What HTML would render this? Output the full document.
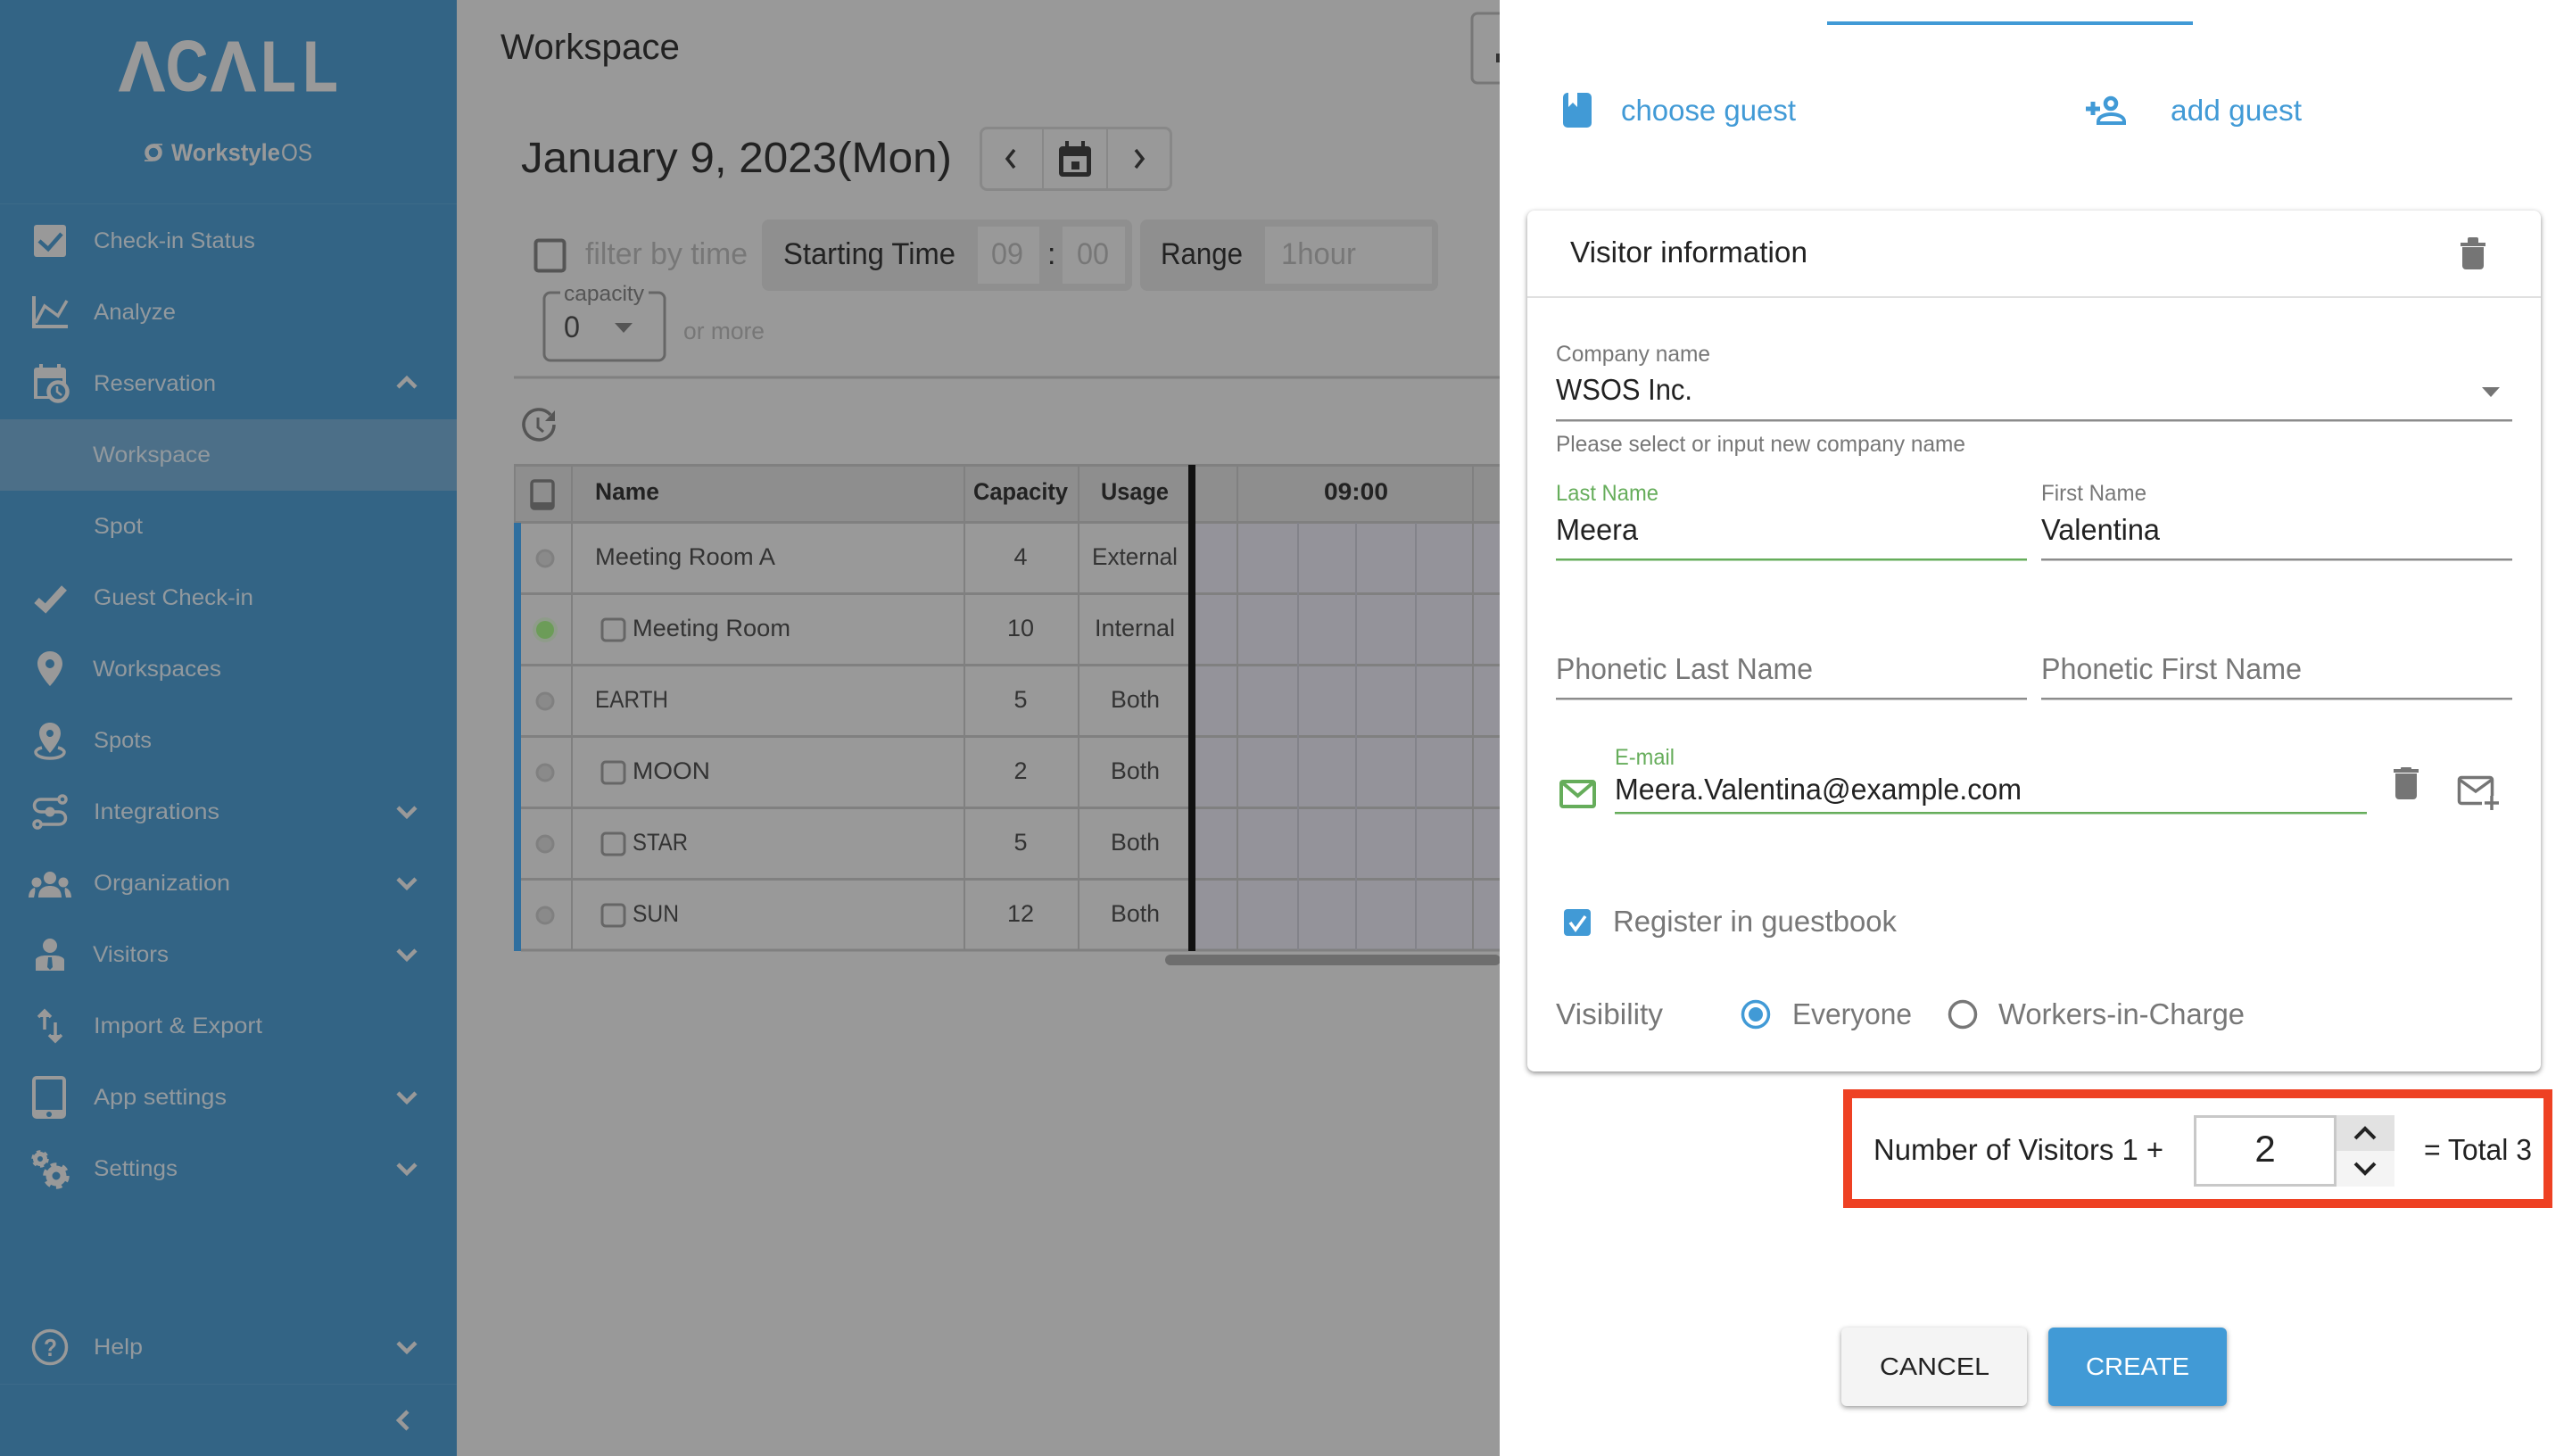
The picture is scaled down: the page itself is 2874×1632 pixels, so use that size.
<!DOCTYPE html>
<html lang="en"><head><meta charset="utf-8"><title>Workspace</title>
<style>
html,body{margin:0;padding:0;width:2874px;height:1632px;overflow:hidden;background:#999}
svg{display:block;font-family:"Liberation Sans",sans-serif}
.m{font-size:25px;fill:#92999e}
.d{fill:#222}.g{fill:#777}.b{fill:#419ad6}.gr{fill:#66ad5b}
.t27{font-size:27px}.t33{font-size:33px}.t25{font-size:25px}.t34{font-size:34px}
.ch{fill:none;stroke:#999;stroke-width:4.5}
.cell{font-size:27px;fill:#333}
</style></head><body>
<svg xmlns="http://www.w3.org/2000/svg" width="2874" height="1632" viewBox="0 0 2874 1632">
<rect width="2874" height="1632" fill="#999"/>
<!-- sidebar -->
<rect width="512" height="1632" fill="#336485"/>
<rect y="228" width="512" height="1" fill="#3c6a89"/>
<rect y="1551" width="512" height="1" fill="#3c6a89"/>
<rect y="470" width="512" height="80" fill="#4c6f88"/>
<g fill="#999" stroke="#999" stroke-width="1" font-weight="700" font-size="80">
<text x="133" y="102" textLength="52" lengthAdjust="spacingAndGlyphs">Λ</text>
<text x="186" y="101" textLength="47" lengthAdjust="spacingAndGlyphs">C</text>
<text x="236" y="102" textLength="51" lengthAdjust="spacingAndGlyphs">Λ</text>
<text x="292.500" y="102" textLength="39" lengthAdjust="spacingAndGlyphs">L</text>
<text x="339.500" y="102" textLength="39" lengthAdjust="spacingAndGlyphs">L</text>
</g>
<circle cx="172" cy="171" r="7.500" fill="none" stroke="#999" stroke-width="4.500"/>
<path d="M172 162h10M162 180h9" stroke="#999" stroke-width="1.800"/>
<text x="192" y="180" font-size="27" font-weight="700" fill="#999" textLength="122" lengthAdjust="spacingAndGlyphs">Workstyle</text>
<text x="315" y="180" font-size="27" fill="#999" textLength="35" lengthAdjust="spacingAndGlyphs">OS</text>
<g class="m">
<text x="105" y="278" textLength="181" lengthAdjust="spacingAndGlyphs">Check-in Status</text>
<text x="105" y="358" textLength="92" lengthAdjust="spacingAndGlyphs">Analyze</text>
<text x="105" y="438" textLength="137" lengthAdjust="spacingAndGlyphs">Reservation</text>
<text x="104" y="518" textLength="132" lengthAdjust="spacingAndGlyphs">Workspace</text>
<text x="105" y="598" textLength="55" lengthAdjust="spacingAndGlyphs">Spot</text>
<text x="105" y="678" textLength="179" lengthAdjust="spacingAndGlyphs">Guest Check-in</text>
<text x="104" y="758" textLength="144" lengthAdjust="spacingAndGlyphs">Workspaces</text>
<text x="105" y="838" textLength="65" lengthAdjust="spacingAndGlyphs">Spots</text>
<text x="105" y="918" textLength="141" lengthAdjust="spacingAndGlyphs">Integrations</text>
<text x="105" y="998" textLength="153" lengthAdjust="spacingAndGlyphs">Organization</text>
<text x="104" y="1078" textLength="85" lengthAdjust="spacingAndGlyphs">Visitors</text>
<text x="105" y="1158" textLength="189" lengthAdjust="spacingAndGlyphs">Import &amp; Export</text>
<text x="105" y="1238" textLength="149" lengthAdjust="spacingAndGlyphs">App settings</text>
<text x="105" y="1318" textLength="94" lengthAdjust="spacingAndGlyphs">Settings</text>
<text x="105" y="1518" textLength="55" lengthAdjust="spacingAndGlyphs">Help</text>
</g>
<path class="ch" d="M446 434l10-10 10 10"/>
<path class="ch" d="M446 905l10 10 10-10M446 985l10 10 10-10M446 1065l10 10 10-10M446 1225l10 10 10-10M446 1305l10 10 10-10M446 1505l10 10 10-10"/>
<path class="ch" d="M457 1582l-10 10 10 10"/>
<!-- sidebar icons -->
<rect x="38" y="252" width="36" height="36" rx="3" fill="#999"/>
<path d="M44 270l10 9 15-17" fill="none" stroke="#336485" stroke-width="4.500"/>
<path d="M38 332v34h38" fill="none" stroke="#999" stroke-width="4"/>
<path d="M40 362l10-19 15 11 10-17" fill="none" stroke="#999" stroke-width="3.500"/>
<path d="M38 415a3 3 0 0 1 3-3h3v-4h4v4h16v-4h4v4h3a3 3 0 0 1 3 3v32H38z" fill="#999"/>
<rect x="42" y="424" width="28" height="20" fill="#336485"/>
<circle cx="65" cy="439" r="10.500" fill="#336485" stroke="#999" stroke-width="4.500"/>
<path d="M64 433v6l5 4" fill="none" stroke="#999" stroke-width="2.500"/>
<path d="M41 673l10 9 21-23" fill="none" stroke="#999" stroke-width="8"/>
<path fill-rule="evenodd" d="M56 730c-8 0-14 6-14 14 0 10 14 25 14 25s14-15 14-25c0-8-6-14-14-14zm0 9a5 5 0 1 1 0 10 5 5 0 0 1 0-10z" fill="#999"/>
<path fill-rule="evenodd" d="M56 810c-7 0-12 5-12 12 0 9 12 22 12 22s12-13 12-22c0-7-5-12-12-12zm0 8a4 4 0 1 1 0 8 4 4 0 0 1 0-8z" fill="#999"/>
<path d="M47 838c-4 1-7 3-7 5 0 4 7 7 16 7s16-3 16-7c0-2-3-4-7-5" fill="none" stroke="#999" stroke-width="3.500"/>
<g fill="none" stroke="#999" stroke-width="3.500"><circle cx="70" cy="896" r="4"/><circle cx="42" cy="924" r="4"/><path d="M66 896H46c-10 0-10 14 0 14h20c10 0 10 14 0 14H46"/></g>
<circle cx="56" cy="910" r="5.500" fill="#999"/>
<g fill="#999"><circle cx="56" cy="984" r="7"/><circle cx="41" cy="989" r="5.500"/><circle cx="71" cy="989" r="5.500"/>
<path d="M43 1006c0-9 5-13 13-13s13 4 13 13zM32 1006c0-6 3-10 7-11 1 3 0 7-1 11zM80 1006c0-6-3-10-7-11-1 3 0 7 1 11z"/></g>
<circle cx="56" cy="1060" r="8" fill="#999"/>
<path fill-rule="evenodd" d="M40 1088v-12c0-3 6-5 11-5h10c5 0 11 2 11 5v12zM54 1073l-1 11 3 3 3-3-1-11z" fill="#999"/>
<path d="M50 1154v-18M43 1140l7-7 7 7M62 1146v18M55 1160l7 7 7-7" fill="#999" stroke="#999" stroke-width="3.500"/>
<rect x="38" y="1208" width="34" height="44" rx="3" fill="none" stroke="#999" stroke-width="4"/>
<rect x="38" y="1244" width="34" height="9" fill="#999"/><circle cx="55" cy="1249" r="3" fill="#336485"/>
<g fill="none" stroke="#999"><circle cx="45" cy="1299" r="5.500" stroke-width="5"/><circle cx="45" cy="1299" r="8" stroke-width="3.500" stroke-dasharray="4.200 4.200"/>
<circle cx="63" cy="1318" r="8" stroke-width="7"/><circle cx="63" cy="1318" r="12.500" stroke-width="4.500" stroke-dasharray="6.500 6.600"/></g>
<circle cx="56" cy="1510" r="18.500" fill="none" stroke="#999" stroke-width="3.500"/>
<text x="49" y="1520" font-size="28" font-weight="700" fill="#999" textLength="15" lengthAdjust="spacingAndGlyphs">?</text>
<!-- main -->
<text x="561" y="66" font-size="40" class="d" textLength="201" lengthAdjust="spacingAndGlyphs">Workspace</text>
<path d="M1682 15h-26a6 6 0 0 0-6 6v66a6 6 0 0 0 6 6h26" fill="none" stroke="#777" stroke-width="3"/>
<rect x="1677" y="60" width="4" height="10" fill="#333"/>
<text x="584" y="193" font-size="48" class="d" textLength="483" lengthAdjust="spacingAndGlyphs">January 9, 2023(Mon)</text>
<rect x="1099.500" y="143.500" width="213" height="69" rx="7" fill="none" stroke="#888" stroke-width="3"/>
<path d="M1169 144v68M1241 144v68" stroke="#888" stroke-width="2"/>
<path d="M1137 168l-8 10 8 10M1273 168l8 10-8 10" fill="none" stroke="#2a2a2a" stroke-width="3.500"/>
<path d="M1187 168a4 4 0 0 1 4-4h3v-6h4v6h14v-6h4v6h3a4 4 0 0 1 4 4v26a4 4 0 0 1-4 4h-28a4 4 0 0 1-4-4z" fill="#2a2a2a"/>
<rect x="1192" y="175" width="26" height="18" fill="#999"/><rect x="1201" y="181" width="9" height="9" fill="#2a2a2a"/>
<rect x="600.500" y="269.500" width="32" height="34" rx="3" fill="none" stroke="#555" stroke-width="4"/>
<text x="656" y="296" class="t34 g" textLength="182" lengthAdjust="spacingAndGlyphs">filter by time</text>
<rect x="854" y="246" width="415" height="80" rx="8" fill="#8f8f8f"/>
<rect x="1278" y="246" width="334" height="80" rx="8" fill="#8f8f8f"/>
<rect x="1096" y="254" width="69" height="64" fill="#999"/><rect x="1191" y="254" width="70" height="64" fill="#999"/><rect x="1418" y="254" width="187" height="64" fill="#999"/>
<text x="878" y="296" class="t34 d" textLength="193" lengthAdjust="spacingAndGlyphs">Starting Time</text>
<text x="1111" y="296" class="t34 g" textLength="36" lengthAdjust="spacingAndGlyphs">09</text>
<text x="1174" y="296" class="t34 d">:</text>
<text x="1207" y="296" class="t34 g" textLength="36" lengthAdjust="spacingAndGlyphs">00</text>
<text x="1301" y="296" class="t34 d" textLength="92" lengthAdjust="spacingAndGlyphs">Range</text>
<text x="1436" y="296" class="t34 g" textLength="84" lengthAdjust="spacingAndGlyphs">1hour</text>
<path d="M628 328h-11a7 7 0 0 0-7 7v62a7 7 0 0 0 7 7h121a7 7 0 0 0 7-7v-62a7 7 0 0 0-7-7h-11" fill="none" stroke="#666" stroke-width="3"/>
<text x="632" y="337" font-size="24" fill="#555" textLength="90" lengthAdjust="spacingAndGlyphs">capacity</text>
<text x="632" y="378" font-size="34" fill="#333" textLength="18" lengthAdjust="spacingAndGlyphs">0</text>
<path d="M689 362h20l-10 11z" fill="#555"/>
<text x="766" y="380" font-size="27" class="g" textLength="91" lengthAdjust="spacingAndGlyphs">or more</text>
<rect x="576" y="421.500" width="1106" height="3" fill="#808080"/>
<path d="M617 465a17 17 0 1 0 4 11" fill="none" stroke="#555" stroke-width="3.500"/>
<path d="M622 460v12h-11z" fill="#555"/>
<path d="M603 468v11l6 5" fill="none" stroke="#555" stroke-width="3"/>
<!-- table -->
<rect x="576" y="520" width="1106" height="65" fill="#8e8e8e"/>
<rect x="1340" y="586" width="342" height="479" fill="#94939a"/>
<g stroke="#808080" fill="none">
<path d="M576 521.500H1682M576 585.500H1682M584 665.500H1682M584 745.500H1682M584 825.500H1682M584 905.500H1682M584 985.500H1682M584 1065H1682" stroke-width="3"/>
<path d="M641 520v545M1081 520v545M1209 520v545M577 520v65M1387 520v545M1651 520v545" stroke-width="2"/>
</g>
<path d="M1455 586v479M1520 586v479M1587 586v479" stroke="#83838a" stroke-width="2"/>
<rect x="576" y="586" width="8" height="480" fill="#2f6f9f"/>
<rect x="1332" y="521" width="8" height="545" fill="#111"/>
<rect x="1306" y="1070" width="376" height="12" rx="6" fill="#6e6e6e"/>
<rect x="596" y="539" width="24" height="31" rx="3" fill="none" stroke="#555" stroke-width="3.500"/>
<rect x="596" y="563" width="24" height="7" fill="#555"/>
<text x="667" y="560" font-size="27" font-weight="700" class="d" textLength="72" lengthAdjust="spacingAndGlyphs">Name</text>
<text x="1091" y="560" font-size="27" font-weight="700" class="d" textLength="106" lengthAdjust="spacingAndGlyphs">Capacity</text>
<text x="1234" y="560" font-size="27" font-weight="700" class="d" textLength="76" lengthAdjust="spacingAndGlyphs">Usage</text>
<text x="1484" y="560" font-size="27" font-weight="700" class="d" textLength="72" lengthAdjust="spacingAndGlyphs">09:00</text>
<g fill="#8a8a8a" stroke="#808080" stroke-width="3"><circle cx="611" cy="626" r="9"/><circle cx="611" cy="786" r="9"/><circle cx="611" cy="866" r="9"/><circle cx="611" cy="946" r="9"/><circle cx="611" cy="1026" r="9"/></g>
<circle cx="611" cy="706" r="14" fill="#7ea36f" opacity=".35"/>
<circle cx="611" cy="706" r="10" fill="#6c9c58"/>
<g fill="none" stroke="#666" stroke-width="3"><rect x="675" y="694" width="25" height="24" rx="4"/><rect x="675" y="854" width="25" height="24" rx="4"/><rect x="675" y="934" width="25" height="24" rx="4"/><rect x="675" y="1014" width="25" height="24" rx="4"/></g>
<g class="cell">
<text x="667" y="633" textLength="202" lengthAdjust="spacingAndGlyphs">Meeting Room A</text>
<text x="709" y="713" textLength="177" lengthAdjust="spacingAndGlyphs">Meeting Room</text>
<text x="667" y="793" textLength="82" lengthAdjust="spacingAndGlyphs">EARTH</text>
<text x="709" y="873" textLength="87" lengthAdjust="spacingAndGlyphs">MOON</text>
<text x="709" y="953" textLength="62" lengthAdjust="spacingAndGlyphs">STAR</text>
<text x="709" y="1033" textLength="52" lengthAdjust="spacingAndGlyphs">SUN</text>
<text x="1144" y="633" text-anchor="middle">4</text><text x="1144" y="713" text-anchor="middle">10</text><text x="1144" y="793" text-anchor="middle">5</text><text x="1144" y="873" text-anchor="middle">2</text><text x="1144" y="953" text-anchor="middle">5</text><text x="1144" y="1033" text-anchor="middle">12</text>
<text x="1224" y="633" textLength="96" lengthAdjust="spacingAndGlyphs">External</text>
<text x="1227" y="713" textLength="90" lengthAdjust="spacingAndGlyphs">Internal</text>
<text x="1245" y="793" textLength="55" lengthAdjust="spacingAndGlyphs">Both</text>
<text x="1245" y="873" textLength="55" lengthAdjust="spacingAndGlyphs">Both</text>
<text x="1245" y="953" textLength="55" lengthAdjust="spacingAndGlyphs">Both</text>
<text x="1245" y="1033" textLength="55" lengthAdjust="spacingAndGlyphs">Both</text>
</g>
<!-- panel -->
<rect x="1681" width="1193" height="1632" fill="#fff"/>
<rect x="2048" y="24" width="410" height="4" fill="#419ad6"/>
<path fill-rule="evenodd" d="M1757 104h1v16l5-5 5 5v-16h11a5 5 0 0 1 5 5v29a5 5 0 0 1-5 5h-22a5 5 0 0 1-5-5v-29a5 5 0 0 1 5-5z" fill="#419ad6"/>
<text x="1817" y="135" class="t33 b" textLength="196" lengthAdjust="spacingAndGlyphs">choose guest</text>
<path d="M2338 122h16M2346 114v15" stroke="#419ad6" stroke-width="5"/>
<circle cx="2366" cy="116" r="6" fill="none" stroke="#419ad6" stroke-width="4.500"/>
<path d="M2352 138v-2c0-5 7-8 14.500-8s14.500 3 14.500 8v2z" fill="none" stroke="#419ad6" stroke-width="4"/>
<text x="2433" y="135" class="t33 b" textLength="147" lengthAdjust="spacingAndGlyphs">add guest</text>
<rect x="1712" y="236" width="1136" height="965" rx="8" fill="#fff" style="filter:drop-shadow(0 2px 3px rgba(0,0,0,.45))"/>
<text x="1760" y="294" class="t33 d" textLength="266" lengthAdjust="spacingAndGlyphs">Visitor information</text>
<path d="M2758 272h28v4h-28zM2766 268a2 2 0 0 1 2-2h8a2 2 0 0 1 2 2v4h-12zM2760 277h24v21a4 4 0 0 1-4 4h-16a4 4 0 0 1-4-4z" fill="#757575"/>
<rect x="1712" y="332" width="1136" height="2" fill="#e0e0e0"/>
<text x="1744" y="405" class="t25 g" textLength="173" lengthAdjust="spacingAndGlyphs">Company name</text>
<text x="1744" y="448" class="t33 d" textLength="153" lengthAdjust="spacingAndGlyphs">WSOS Inc.</text>
<path d="M2782 434h20l-10 11z" fill="#757575"/>
<rect x="1744" y="470" width="1072" height="2.500" fill="#8c8c8c"/>
<text x="1744" y="506" class="t25 g" textLength="459" lengthAdjust="spacingAndGlyphs">Please select or input new company name</text>
<text x="1744" y="561" class="t25 gr" textLength="115" lengthAdjust="spacingAndGlyphs">Last Name</text>
<text x="2288" y="561" class="t25 g" textLength="118" lengthAdjust="spacingAndGlyphs">First Name</text>
<text x="1744" y="605" class="t33 d" textLength="92" lengthAdjust="spacingAndGlyphs">Meera</text>
<text x="2288" y="605" class="t33 d" textLength="133" lengthAdjust="spacingAndGlyphs">Valentina</text>
<rect x="1744" y="626" width="528" height="2.500" fill="#66ad5b"/>
<rect x="2288" y="626" width="528" height="2.500" fill="#8c8c8c"/>
<text x="1744" y="761" class="t33 g" textLength="288" lengthAdjust="spacingAndGlyphs">Phonetic Last Name</text>
<text x="2288" y="761" class="t33 g" textLength="292" lengthAdjust="spacingAndGlyphs">Phonetic First Name</text>
<rect x="1744" y="782" width="528" height="2.500" fill="#8c8c8c"/>
<rect x="2288" y="782" width="528" height="2.500" fill="#8c8c8c"/>
<text x="1810" y="857" class="t25 gr" textLength="67" lengthAdjust="spacingAndGlyphs">E-mail</text>
<text x="1810" y="896" class="t33 d" textLength="456" lengthAdjust="spacingAndGlyphs">Meera.Valentina@example.com</text>
<rect x="1810" y="910" width="843" height="2.500" fill="#66ad5b"/>
<rect x="1750" y="876" width="37" height="28" rx="2" fill="none" stroke="#66ad5b" stroke-width="4"/>
<path d="M1751 877l17.500 15 17.500-15" fill="none" stroke="#66ad5b" stroke-width="4"/>
<path d="M2683 862h28v4h-28zM2691 862v-1a1 1 0 0 1 1-1h10a1 1 0 0 1 1 1v1zM2685 867h24v25a4 4 0 0 1-4 4h-16a4 4 0 0 1-4-4z" fill="#757575"/>
<path d="M2782 900.500h-23a2.500 2.500 0 0 1-2.500-2.500v-24a2.500 2.500 0 0 1 2.500-2.500h32a2.500 2.500 0 0 1 2.500 2.500v18" fill="none" stroke="#757575" stroke-width="3.500"/>
<path d="M2757 874l18 13 18-13M2793 892v16M2785 900h16" fill="none" stroke="#757575" stroke-width="3.500"/>
<rect x="1753" y="1019" width="30" height="30" rx="4" fill="#419ad6"/>
<path d="M1760 1034l6 8 11-15" fill="none" stroke="#fff" stroke-width="3.500"/>
<text x="1808" y="1044" class="t33 g" textLength="318" lengthAdjust="spacingAndGlyphs">Register in guestbook</text>
<text x="1744" y="1148" class="t33 g" textLength="120" lengthAdjust="spacingAndGlyphs">Visibility</text>
<circle cx="1968" cy="1137" r="14.500" fill="none" stroke="#419ad6" stroke-width="3.500"/><circle cx="1968" cy="1137" r="8" fill="#419ad6"/>
<text x="2009" y="1148" class="t33 g" textLength="134" lengthAdjust="spacingAndGlyphs">Everyone</text>
<circle cx="2200" cy="1137" r="14.500" fill="none" stroke="#777" stroke-width="3.500"/>
<text x="2240" y="1148" class="t33 g" textLength="276" lengthAdjust="spacingAndGlyphs">Workers-in-Charge</text>
<rect x="2071" y="1226" width="785" height="123" fill="none" stroke="#ee4123" stroke-width="10"/>
<text x="2100" y="1300" class="t33 d" textLength="325" lengthAdjust="spacingAndGlyphs">Number of Visitors 1 +</text>
<rect x="2460.500" y="1251.500" width="157" height="77" fill="#fff" stroke="#c8c8c8" stroke-width="3"/>
<text x="2539" y="1302" font-size="42" class="d" text-anchor="middle">2</text>
<rect x="2619" y="1250" width="65" height="40" fill="#e2e2e2"/><rect x="2619" y="1290" width="65" height="40" fill="#f4f4f4"/>
<path d="M2640 1276l11-11 11 11M2640 1304l11 11 11-11" fill="none" stroke="#222" stroke-width="4"/>
<text x="2717" y="1300" class="t33 d" textLength="121" lengthAdjust="spacingAndGlyphs">= Total 3</text>
<rect x="2064" y="1488" width="208" height="88" rx="6" fill="#f4f4f4" style="filter:drop-shadow(0 2px 3px rgba(0,0,0,.4))"/>
<rect x="2296" y="1488" width="200" height="88" rx="6" fill="#419ad6" style="filter:drop-shadow(0 2px 3px rgba(0,0,0,.4))"/>
<text x="2107" y="1541" font-size="28" class="d" textLength="123" lengthAdjust="spacingAndGlyphs">CANCEL</text>
<text x="2338" y="1541" font-size="28" fill="#fff" textLength="116" lengthAdjust="spacingAndGlyphs">CREATE</text>
</svg>
</body></html>
